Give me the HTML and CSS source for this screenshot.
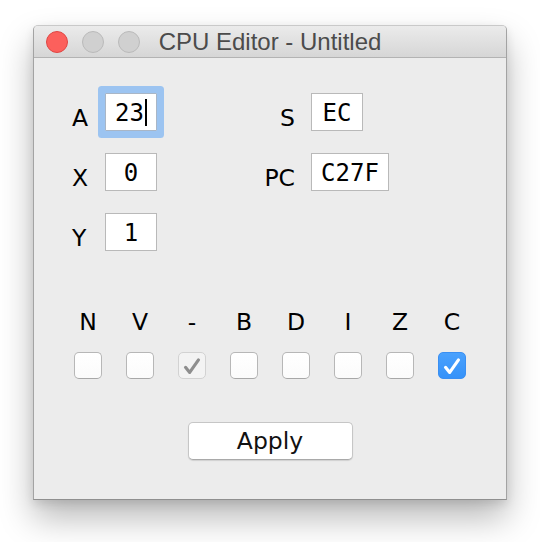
FILE: index.html
```html
<!DOCTYPE html>
<html>
<head>
<meta charset="utf-8">
<link rel="stylesheet" href="styles.css">
</head>
<body>
<div class="window">
  <div class="titlebar">
    <div class="lights">
      <span class="light red"></span>
      <span class="light gray"></span>
      <span class="light gray"></span>
    </div>
    <div class="title">CPU Editor - Untitled</div>
  </div>
  <div class="content">
    <div class="regs">
      <div class="regcol left">
        <span class="lbl">A</span><span class="field focus">23<span class="caret"></span></span>
        <span class="lbl">X</span><span class="field">0</span>
        <span class="lbl">Y</span><span class="field">1</span>
      </div>
      <div class="regcol right">
        <span class="lbl">S</span><span class="field">EC</span>
        <span class="lbl">PC</span><span class="field wide">C27F</span>
      </div>
    </div>
    <div class="flags">
      <span class="flag">N</span><span class="flag">V</span><span class="flag">-</span><span class="flag">B</span>
      <span class="flag">D</span><span class="flag">I</span><span class="flag">Z</span><span class="flag">C</span>
      <span class="box"></span>
      <span class="box"></span>
      <span class="box disabled"><svg viewBox="0 0 27 27"><path d="M6.5 15.5 L11 21 L20.5 7.5"/></svg></span>
      <span class="box"></span>
      <span class="box"></span>
      <span class="box"></span>
      <span class="box"></span>
      <span class="box checked"><svg viewBox="0 0 27 27"><path d="M6.5 15.5 L11 21 L20.5 7.5"/></svg></span>
    </div>
    <div class="actions">
      <button class="btn">Apply</button>
    </div>
  </div>
</div>
</body>
</html>
```

FILE: styles.css
```css
html, body {
  margin: 0;
  padding: 0;
  background: #ffffff;
}

body {
  min-height: 542px;
  padding-top: 25px;
  box-sizing: border-box;
}

.window {
  box-sizing: border-box;
  margin-left: 33px;
  width: 474px;
  height: 475px;
  border: 1px solid #a3a3a3;
  border-top-color: #c9c9c9;
  border-bottom-color: #8f8f8f;
  border-radius: 5px 5px 0 0;
  background: #ececec;
  box-shadow: 0 18px 34px rgba(0, 0, 0, 0.28), 0 4px 10px rgba(0, 0, 0, 0.10);
}

.titlebar {
  display: grid;
  height: 31px;
  border-bottom: 1px solid #b3b3b3;
  border-radius: 4px 4px 0 0;
  background: linear-gradient(#ebebeb, #d6d6d6);
  align-items: center;
}

.lights {
  grid-area: 1 / 1;
  display: flex;
  gap: 14px;
  padding-left: 12px;
  justify-self: start;
}

.light {
  box-sizing: border-box;
  width: 22px;
  height: 22px;
  border-radius: 50%;
}

.light.red {
  background: #fc605c;
  border: 1px solid #df4744;
}

.light.gray {
  background: #d0d0d0;
  border: 1px solid #bababa;
}

.title {
  grid-area: 1 / 1;
  justify-self: center;
  font-family: "Liberation Sans", Arial, sans-serif;
  font-size: 24px;
  color: #4b4b4b;
  line-height: 31px;
}

.content {
  padding-top: 35px;
  font-family: "DejaVu Sans", sans-serif;
  color: #000;
}

.regs {
  display: flex;
  align-items: flex-start;
  padding-left: 38px;
}

.regcol {
  display: grid;
  column-gap: 16px;
  row-gap: 22px;
  align-items: start;
  align-content: start;
}

.regcol.left {
  grid-template-columns: 17px 52px;
}

.regcol.right {
  grid-template-columns: 36px auto;
  margin-left: 102px;
}

.regcol.right .lbl {
  justify-self: end;
}

.lbl {
  font-size: 23.5px;
  line-height: 26px;
  padding-top: 12px;
  white-space: nowrap;
}

.field {
  box-sizing: border-box;
  display: block;
  width: 52px;
  height: 38px;
  border: 1px solid #b9b9b9;
  background: #fff;
  font-family: "DejaVu Sans Mono", monospace;
  font-size: 24px;
  line-height: 36px;
  padding-top: 1px;
  text-align: center;
  color: #000;
}

.field.wide {
  width: 78px;
}

.field.focus {
  border-color: #a9b6c6;
  border-radius: 1px;
  box-shadow: 0 0 0 7px #9cc4f1;
}

.caret {
  display: inline-block;
  width: 2px;
  height: 27px;
  background: #000;
  vertical-align: -5px;
  margin-left: 1px;
}

.flags {
  display: grid;
  grid-template-columns: repeat(8, 52px);
  row-gap: 16px;
  padding-left: 28px;
  margin-top: 57px;
  justify-items: center;
}

.flag {
  font-size: 23.5px;
  line-height: 28px;
}

.box {
  box-sizing: border-box;
  width: 28px;
  height: 27px;
  border: 1px solid #b7b7b7;
  border-bottom-color: #a8a8a8;
  border-radius: 5px;
  background: linear-gradient(#ffffff, #fbfbfb);
}

.box svg {
  display: block;
  width: 100%;
  height: 100%;
}

.box svg path {
  fill: none;
  stroke-width: 3.4;
  stroke-linecap: round;
  stroke-linejoin: round;
}

.box.disabled {
  background: #f3f3f3;
  border-color: #d2d2d2;
}

.box.disabled path {
  stroke: #8e8e8e;
}

.box.checked {
  background: linear-gradient(#4aa1fd, #3592f9);
  border-color: #3a8ff2;
}

.box.checked path {
  stroke: #fff;
}

.actions {
  display: flex;
  justify-content: center;
  margin-top: 43px;
}

.btn {
  box-sizing: border-box;
  width: 165px;
  height: 38px;
  border: 1px solid #c6c6c6;
  border-bottom-color: #a9a9a9;
  border-radius: 5px;
  background: #fff;
  box-shadow: 0 1px 1px rgba(0, 0, 0, 0.12);
  font-family: "DejaVu Sans", sans-serif;
  font-size: 23.5px;
  color: #111;
  padding: 0;
  line-height: 36px;
}
```
